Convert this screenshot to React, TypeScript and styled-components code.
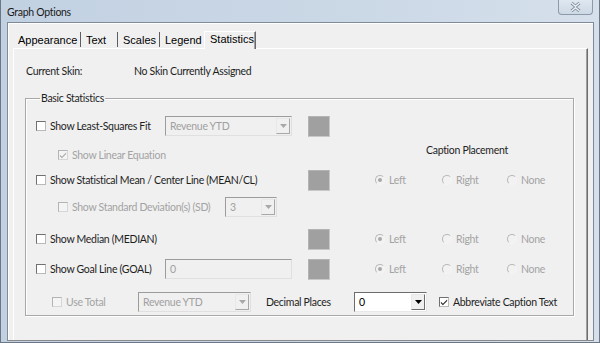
import styled, { createGlobalStyle, css } from "styled-components";

const GlobalStyle = createGlobalStyle`
  html, body {
    margin: 0;
    padding: 0;
    width: 600px;
    height: 343px;
    overflow: hidden;
    background: #ffffff;
  }
`;

const uiFont = `"Lato", "Open Sans", sans-serif`;

const Window = styled.div`
  box-sizing: border-box;
  width: 600px;
  height: 343px;
  display: flex;
  flex-direction: column;
  border: 1px solid #6b7785;
  border-top: none;
  background: linear-gradient(to right, #c2d1e2 0%, #cbd8e6 60%, #d6e0ec 100%);
  font-family: ${uiFont};
  font-size: 10.5px;
  letter-spacing: -0.3px;
  color: #1e1e1e;
`;

const TitleBar = styled.div`
  height: 22px;
  display: flex;
  align-items: center;
  padding-left: 6px;
`;

const Title = styled.span`
  color: #1a1a1a;
  margin-top: 2px;
`;

const CloseButton = styled.div`
  margin-left: auto;
  margin-right: 6px;
  align-self: flex-start;
  width: 35px;
  height: 15px;
  box-sizing: border-box;
  border: 1px solid #8e9aa8;
  border-top: none;
  border-radius: 0 0 4px 4px;
  background: linear-gradient(#dfe7f0, #cdd9e6);
  display: flex;
  align-items: center;
  justify-content: center;
`;

const Client = styled.div`
  flex: 1;
  margin: 0 5px 1px 6px;
  border: 1px solid #7f8b98;
  border-bottom: 1px solid #8a8a8a;
  background: #f0f0f0;
  display: flex;
  flex-direction: column;
  box-shadow: inset 1px 1px 0 #ffffff;
`;

const TabStrip = styled.div`
  display: flex;
  align-items: flex-end;
  height: 18px;
  margin-top: 7px;
  padding-left: 5px;
  font-family: "Liberation Sans", Arial, sans-serif;
  font-size: 11px;
  letter-spacing: 0;
`;

const Tab = styled.div<{ $w: number; $active?: boolean; $sep?: boolean }>`
  box-sizing: border-box;
  width: ${(p) => p.$w}px;
  height: 17px;
  padding-left: 5px;
  display: flex;
  align-items: center;
  color: #000;
  ${(p) =>
    p.$sep &&
    css`
      border-right: 1px solid #5e5e5e;
      height: 15px;
      margin-bottom: 1px;
    `}
  ${(p) =>
    p.$active &&
    css`
      height: 18px;
      margin-bottom: -1px;
      padding-bottom: 3px;
      background: #f0f0f0;
      border-top: 1px solid #ffffff;
      border-left: 1px solid #ffffff;
      border-right: 1px solid #696969;
      box-shadow: inset -1px 0 0 #a0a0a0;
      position: relative;
      z-index: 1;
    `}
`;

const TabPanel = styled.div`
  flex: 1;
  min-width: 0;
  margin: 0 5px 0 5px;
  border-top: 1px solid #ffffff;
  border-left: 1px solid #ffffff;
  border-right: 1px solid #6d6d6d;
  box-shadow: inset -1px 0 0 #a0a0a0;
  padding: 0 13px 0 11px;
  display: flex;
  flex-direction: column;
`;

const SkinRow = styled.div`
  display: flex;
  align-items: center;
  height: 20px;
  margin-top: 12px;
  padding-left: 1px;
`;

const SkinLabel = styled.span`
  width: 108px;
`;

const GroupBox = styled.fieldset`
  margin: 11px 0 0 0;
  padding: 0 0 0 10px;
  min-width: 0;
  border: 1px solid #a8a8a8;
  box-shadow: 1px 1px 0 #ffffff, inset 1px 1px 0 #ffffff;
  height: 224px;
  box-sizing: border-box;
  display: flex;
  flex-direction: column;
`;

const Legend = styled.legend`
  padding: 0 1px;
  margin-left: 4px;
  line-height: 13px;
`;

const Row = styled.div<{ $h: number; $top?: number }>`
  display: flex;
  align-items: center;
  height: ${(p) => p.$h}px;
  margin-top: ${(p) => p.$top ?? 0}px;
`;

const Cell = styled.div<{ $w?: number; $indent?: number }>`
  display: flex;
  align-items: center;
  flex: none;
  width: ${(p) => (p.$w ? `${p.$w}px` : "auto")};
  padding-left: ${(p) => p.$indent ?? 0}px;
  box-sizing: border-box;
`;

const Box = styled.span<{ $disabled?: boolean }>`
  width: 10px;
  height: 10px;
  box-sizing: border-box;
  flex: none;
  border: 1px solid ${(p) => (p.$disabled ? "#b4b4b4" : "#707070")};
  border-right-color: ${(p) => (p.$disabled ? "#d6d6d6" : "#b9b9b9")};
  border-bottom-color: ${(p) => (p.$disabled ? "#d6d6d6" : "#b9b9b9")};
  background: ${(p) => (p.$disabled ? "#f4f4f4" : "#ffffff")};
  display: flex;
  align-items: center;
  justify-content: center;
  margin-right: 4px;
`;

const Text = styled.span<{ $disabled?: boolean }>`
  color: ${(p) => (p.$disabled ? "#a3a3a3" : "#1e1e1e")};
  white-space: nowrap;
`;

const Combo = styled.div<{ $w: number; $enabled?: boolean }>`
  box-sizing: border-box;
  width: ${(p) => p.$w}px;
  height: 20px;
  flex: none;
  border: 1px solid ${(p) => (p.$enabled ? "#6d6d6d" : "#9c9c9c")};
  border-right-color: ${(p) => (p.$enabled ? "#e8e8e8" : "#e0e0e0")};
  border-bottom-color: ${(p) => (p.$enabled ? "#e8e8e8" : "#e0e0e0")};
  background: ${(p) => (p.$enabled ? "#ffffff" : "#f0f0f0")};
  display: flex;
  align-items: stretch;
  padding: 1px;
  color: ${(p) => (p.$enabled ? "#000" : "#a0a0a0")};
`;

const ComboValue = styled.span`
  flex: 1;
  padding-left: 3px;
  display: flex;
  align-items: center;
  overflow: hidden;
  white-space: nowrap;
`;

const ComboButton = styled.span<{ $enabled?: boolean }>`
  width: 14px;
  box-sizing: border-box;
  border: 1px solid #e8e8e8;
  border-right-color: ${(p) => (p.$enabled ? "#6d6d6d" : "#a8a8a8")};
  border-bottom-color: ${(p) => (p.$enabled ? "#6d6d6d" : "#a8a8a8")};
  background: #f0f0f0;
  display: flex;
  align-items: center;
  justify-content: center;
`;

const Swatch = styled.div<{ $ml: number }>`
  width: 22px;
  height: 21px;
  flex: none;
  margin-left: ${(p) => p.$ml}px;
  box-sizing: border-box;
  background: #a0a0a0;
  border: 1px solid #c8c8c8;
  border-top-color: #b4b4b4;
  border-left-color: #b4b4b4;
`;

const Radio = styled.span<{ $on?: boolean }>`
  width: 10px;
  height: 10px;
  box-sizing: border-box;
  border-radius: 50%;
  flex: none;
  margin-right: 4px;
  border: 1px solid #b8b8b8;
  border-right-color: #f4f4f4;
  border-bottom-color: #f4f4f4;
  background: #f2f2f2;
  display: flex;
  align-items: center;
  justify-content: center;
  &::after {
    content: "";
    width: 4px;
    height: 4px;
    border-radius: 50%;
    background: ${(p) => (p.$on ? "#a8a8a8" : "transparent")};
  }
`;

const Caption = styled.span`
  margin-left: 22px;
  align-self: flex-start;
  margin-top: 3px;
  color: #1e1e1e;
`;

function Tick({ color }: { color: string }) {
  return (
    <svg width="8" height="8" viewBox="0 0 9 9">
      <path d="M1 4.2 L3.3 6.6 L8 1.6 L8 3.4 L3.3 8.2 L1 5.9 Z" fill={color} />
    </svg>
  );
}

function Arrow({ color }: { color: string }) {
  return (
    <svg width="7" height="4" viewBox="0 0 7 4">
      <path d="M0 0 H7 L3.5 4 Z" fill={color} />
    </svg>
  );
}

function Check({
  label,
  checked,
  disabled,
}: {
  label: string;
  checked?: boolean;
  disabled?: boolean;
}) {
  return (
    <>
      <Box $disabled={disabled}>
        {checked && <Tick color={disabled ? "#a8a8a8" : "#202020"} />}
      </Box>
      <Text $disabled={disabled}>{label}</Text>
    </>
  );
}

function Dropdown({ value, w, enabled }: { value: string; w: number; enabled?: boolean }) {
  return (
    <Combo $w={w} $enabled={enabled}>
      <ComboValue>{value}</ComboValue>
      <ComboButton $enabled={enabled}>
        <Arrow color={enabled ? "#000" : "#a8a8a8"} />
      </ComboButton>
    </Combo>
  );
}

function Radios() {
  return (
    <>
      <Cell $w={45} />
      <Cell $w={67}>
        <Radio $on />
        <Text $disabled>Left</Text>
      </Cell>
      <Cell $w={65}>
        <Radio />
        <Text $disabled>Right</Text>
      </Cell>
      <Cell>
        <Radio />
        <Text $disabled>None</Text>
      </Cell>
    </>
  );
}

export default function App() {
  return (
    <>
      <GlobalStyle />
      <Window>
        <TitleBar>
          <Title>Graph Options</Title>
          <CloseButton>
            <svg width="11" height="10" viewBox="0 0 11 10">
              <path
                d="M1.5 1 L5.5 4.3 L9.5 1 M1.5 9 L5.5 5.7 L9.5 9"
                stroke="#7c8796"
                strokeWidth="3"
                fill="none"
              />
              <path
                d="M1.5 1 L5.5 4.3 L9.5 1 M1.5 9 L5.5 5.7 L9.5 9"
                stroke="#eef2f6"
                strokeWidth="1.4"
                fill="none"
              />
            </svg>
          </CloseButton>
        </TitleBar>
        <Client>
          <TabStrip>
            <Tab $w={68} $sep>Appearance</Tab>
            <Tab $w={37} $sep>Text</Tab>
            <Tab $w={42} $sep>Scales</Tab>
            <Tab $w={44}>Legend</Tab>
            <Tab $w={52} $active>Statistics</Tab>
          </TabStrip>
          <TabPanel>
            <SkinRow>
              <SkinLabel>Current Skin:</SkinLabel>
              <span>No Skin Currently Assigned</span>
            </SkinRow>
            <GroupBox>
              <Legend>Basic Statistics</Legend>
              <Row $h={30} $top={6}>
                <Cell $w={129}>
                  <Check label="Show Least-Squares Fit" />
                </Cell>
                <Dropdown value="Revenue YTD" w={127} />
                <Swatch $ml={16} />
              </Row>
              <Row $h={28}>
                <Cell $w={368} $indent={22}>
                  <Check label="Show Linear Equation" checked disabled />
                </Cell>
                <Caption>Caption Placement</Caption>
              </Row>
              <Row $h={22}>
                <Cell $w={272}>
                  <Check label="Show Statistical Mean / Center Line (MEAN/CL)" />
                </Cell>
                <Swatch $ml={0} />
                <Radios />
              </Row>
              <Row $h={32}>
                <Cell $w={189} $indent={22}>
                  <Check label="Show Standard Deviation(s) (SD)" disabled />
                </Cell>
                <Dropdown value="3" w={52} />
              </Row>
              <Row $h={32}>
                <Cell $w={272}>
                  <Check label="Show Median (MEDIAN)" />
                </Cell>
                <Swatch $ml={0} />
                <Radios />
              </Row>
              <Row $h={28}>
                <Cell $w={129}>
                  <Check label="Show Goal Line (GOAL)" />
                </Cell>
                <Combo $w={127}>
                  <ComboValue>0</ComboValue>
                </Combo>
                <Swatch $ml={16} />
                <Radios />
              </Row>
              <Row $h={38}>
                <Cell $w={102} $indent={16}>
                  <Check label="Use Total" disabled />
                </Cell>
                <Dropdown value="Revenue YTD" w={113} />
                <Cell $w={103} $indent={15}>
                  <Text>Decimal Places</Text>
                </Cell>
                <Dropdown value="0" w={73} enabled />
                <Cell $indent={12}>
                  <Check label="Abbreviate Caption Text" checked />
                </Cell>
              </Row>
            </GroupBox>
          </TabPanel>
        </Client>
      </Window>
    </>
  );
}
